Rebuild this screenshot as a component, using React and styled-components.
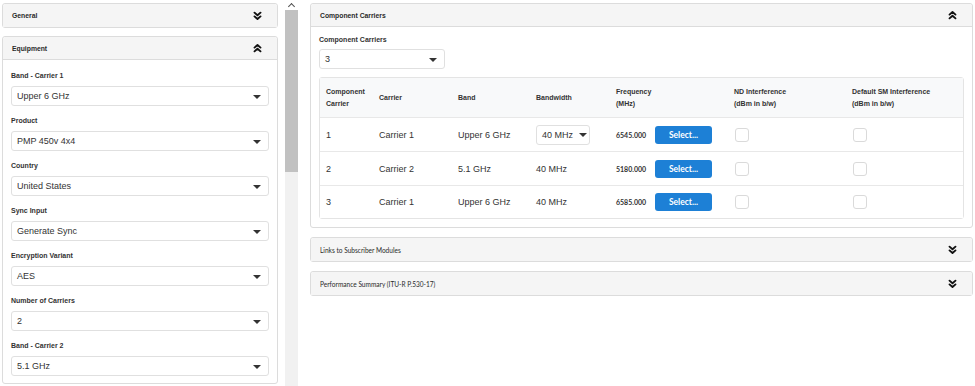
import React from 'react';
import styled, { createGlobalStyle } from 'styled-components';

const GlobalStyle = createGlobalStyle`
  * { box-sizing: border-box; }
  body {
    margin: 0;
    background: #fff;
    font-family: "Liberation Sans", Arial, sans-serif;
    color: #333;
  }
`;

const Page = styled.div`
  display: flex;
  align-items: stretch;
  height: 386px;
  overflow: hidden;
`;

const LeftCol = styled.div`
  width: 278px;
  padding: 3px 0 0 2px;
  display: flex;
  flex-direction: column;
  gap: 8px;
`;

const RightCol = styled.div`
  width: 663px;
  margin-left: 12px;
  padding-top: 3px;
  display: flex;
  flex-direction: column;
  gap: 9px;
`;

const Scrollbar = styled.div`
  width: 13px;
  margin-left: 7px;
  background: #f1f1f1;
  display: flex;
  flex-direction: column;
  align-items: center;
`;

const ScrollArrow = styled.div`
  height: 10px;
  width: 100%;
  background: #fff;
  display: flex;
  justify-content: center;
  padding-top: 2px;
`;

const ScrollThumb = styled.div`
  width: 100%;
  height: 162px;
  background: #c1c1c1;
`;

const Card = styled.div`
  border: 1px solid #dcdcdc;
  border-radius: 3px;
  background: #fff;
  flex-shrink: 0;
`;

const CardHeader = styled.div`
  height: 23px;
  background: #f5f5f5;
  border-bottom: ${p => (p.$open ? '1px solid #dcdcdc' : 'none')};
  border-radius: 3px 3px 0 0;
  display: flex;
  align-items: center;
  justify-content: space-between;
  padding: 0 15px 0 9px;
`;

const HeaderTitle = styled.div`
  font-size: 6.8px;
  font-weight: bold;
  color: #2a2a2a;
`;

const SubTitle = styled.div`
  font-family: Lato, "Open Sans", sans-serif;
  font-size: 7.8px;
  color: #2a2a2a;
  transform: scaleX(0.84);
  transform-origin: left center;
  white-space: nowrap;
`;

const EquipmentBody = styled.div`
  padding: 10px 8px 7px 8px;
  display: flex;
  flex-direction: column;
  gap: 9px;
`;

const Field = styled.div`
  display: flex;
  flex-direction: column;
  gap: ${p => p.$gap ?? 4}px;
`;

const Label = styled.div`
  font-size: 7px;
  font-weight: bold;
  line-height: 12px;
  color: #333;
`;

const Select = styled.div`
  height: 20px;
  width: ${p => (p.$w ? `${p.$w}px` : '100%')};
  border: 1px solid #e0e0e0;
  border-radius: 3px;
  background: #fff;
  display: flex;
  align-items: center;
  justify-content: space-between;
  gap: 6px;
  padding: 0 7px 0 5px;
  font-size: 9px;
  color: #333;
  white-space: nowrap;
`;

const Caret = styled.span`
  width: 0;
  height: 0;
  flex-shrink: 0;
  border-left: 4px solid transparent;
  border-right: 4px solid transparent;
  border-top: 4px solid #333;
  margin-top: 1px;
`;

const UpCaret = styled.span`
  width: 5px;
  height: 5px;
  border-left: 1.5px solid #505050;
  border-top: 1.5px solid #505050;
  transform: rotate(45deg);
  margin-top: 2px;
`;

const CarrierBody = styled.div`
  padding: 7px 8px 8px 8px;
  display: flex;
  flex-direction: column;
`;

const Table = styled.div`
  margin-top: 8px;
  border: 1px solid #e4e4e4;
  border-radius: 3px;
`;

const Row = styled.div`
  display: grid;
  grid-template-columns: 53px 79px 78px 80px 118px 118px 1fr;
  align-items: center;
  height: ${p => p.$h}px;
  padding-left: 6px;
  background: ${p => (p.$head ? '#f8f9fa' : '#fff')};
  border-top: ${p => (p.$first ? 'none' : '1px solid #e8e8e8')};
  font-size: 9px;
  color: #333;
`;

const HeadCell = styled.div`
  font-size: 7px;
  font-weight: bold;
  line-height: 12px;
`;

const FreqCell = styled.div`
  display: flex;
  align-items: center;
  gap: 8px;
`;

const Freq = styled.span`
  font-family: Lato, sans-serif;
  font-size: 7px;
  font-weight: bold;
  color: #333;
  width: 31px;
`;

const SelectButton = styled.button`
  width: 57px;
  height: 18px;
  border: none;
  border-radius: 3px;
  background: #1d80d6;
  color: #fff;
  font-family: Lato, sans-serif;
  font-size: 8.5px;
  font-weight: bold;
  padding: 0;
`;

const Checkbox = styled.span`
  display: block;
  width: 14px;
  height: 14px;
  margin-left: 1px;
  border: 1px solid #dadada;
  border-radius: 3px;
  background: #fff;
`;

function Chevrons({ up }) {
  return (
    <svg width="9" height="10" viewBox="0 0 24 26" fill="none" stroke="#111" strokeWidth="5"
      strokeLinecap="round" strokeLinejoin="round"
      style={{ transform: up ? 'rotate(180deg)' : 'none' }}>
      <path d="M4 4l8 7 8-7" />
      <path d="M4 14l8 7 8-7" />
    </svg>
  );
}

const equipment = [
  ['Band - Carrier 1', 'Upper 6 GHz'],
  ['Product', 'PMP 450v 4x4'],
  ['Country', 'United States'],
  ['Sync Input', 'Generate Sync'],
  ['Encryption Variant', 'AES'],
  ['Number of Carriers', '2'],
  ['Band - Carrier 2', '5.1 GHz'],
];

const carriers = [
  { id: 1, carrier: 'Carrier 1', band: 'Upper 6 GHz', bw: '40 MHz', freq: '6545.000', editable: true, h: 34 },
  { id: 2, carrier: 'Carrier 2', band: '5.1 GHz', bw: '40 MHz', freq: '5180.000', h: 34 },
  { id: 3, carrier: 'Carrier 1', band: 'Upper 6 GHz', bw: '40 MHz', freq: '6585.000', h: 33 },
];

export default function App() {
  return (
    <Page>
      <GlobalStyle />
      <LeftCol>
        <Card>
          <CardHeader>
            <HeaderTitle>General</HeaderTitle>
            <Chevrons />
          </CardHeader>
        </Card>
        <Card>
          <CardHeader $open>
            <HeaderTitle>Equipment</HeaderTitle>
            <Chevrons up />
          </CardHeader>
          <EquipmentBody>
            {equipment.map(([label, value]) => (
              <Field key={label}>
                <Label>{label}</Label>
                <Select>
                  {value}
                  <Caret />
                </Select>
              </Field>
            ))}
          </EquipmentBody>
        </Card>
      </LeftCol>
      <Scrollbar>
        <ScrollArrow><UpCaret /></ScrollArrow>
        <ScrollThumb />
      </Scrollbar>
      <RightCol>
        <Card>
          <CardHeader $open>
            <HeaderTitle>Component Carriers</HeaderTitle>
            <Chevrons up />
          </CardHeader>
          <CarrierBody>
            <Field $gap={3}>
              <Label>Component Carriers</Label>
              <Select $w={126}>
                3
                <Caret />
              </Select>
            </Field>
            <Table>
              <Row $head $first $h={39}>
                <HeadCell>Component<br />Carrier</HeadCell>
                <HeadCell>Carrier</HeadCell>
                <HeadCell>Band</HeadCell>
                <HeadCell>Bandwidth</HeadCell>
                <HeadCell>Frequency<br />(MHz)</HeadCell>
                <HeadCell>ND Interference<br />(dBm in b/w)</HeadCell>
                <HeadCell>Default SM Interference<br />(dBm in b/w)</HeadCell>
              </Row>
              {carriers.map(c => (
                <Row key={c.id} $h={c.h}>
                  <div>{c.id}</div>
                  <div>{c.carrier}</div>
                  <div>{c.band}</div>
                  <div>
                    {c.editable ? (
                      <Select $w={54}>
                        {c.bw}
                        <Caret />
                      </Select>
                    ) : c.bw}
                  </div>
                  <FreqCell>
                    <Freq>{c.freq}</Freq>
                    <SelectButton>Select...</SelectButton>
                  </FreqCell>
                  <div><Checkbox /></div>
                  <div><Checkbox /></div>
                </Row>
              ))}
            </Table>
          </CarrierBody>
        </Card>
        <Card>
          <CardHeader>
            <SubTitle>Links to Subscriber Modules</SubTitle>
            <Chevrons />
          </CardHeader>
        </Card>
        <Card>
          <CardHeader>
            <SubTitle>Performance Summary (ITU-R P.530-17)</SubTitle>
            <Chevrons />
          </CardHeader>
        </Card>
      </RightCol>
    </Page>
  );
}
